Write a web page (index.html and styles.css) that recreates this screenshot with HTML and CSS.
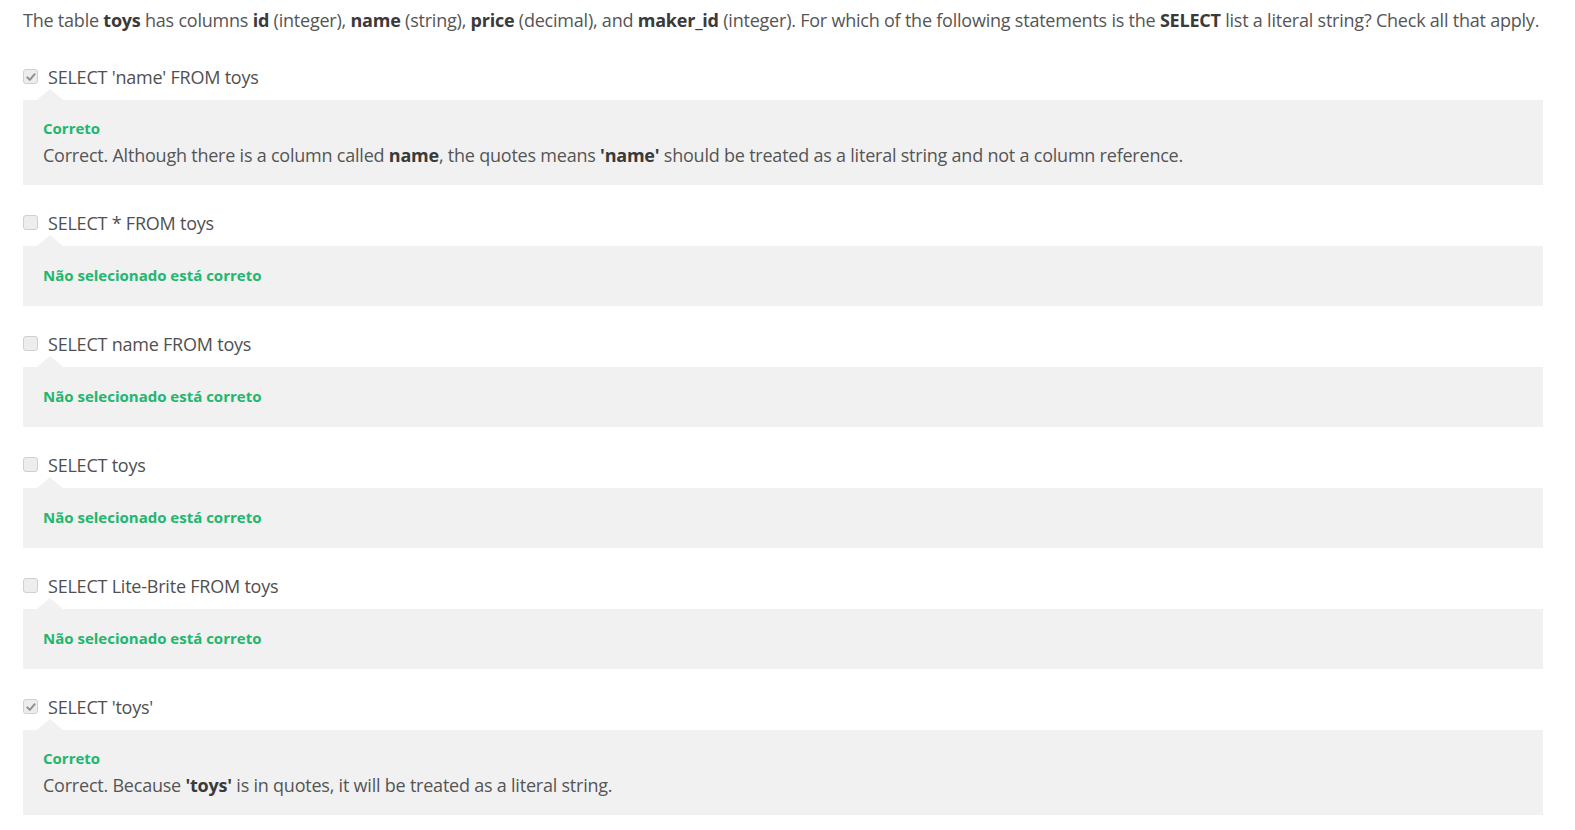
FILE: index.html
```html
<!DOCTYPE html>
<html lang="en">
<head>
<meta charset="utf-8">
<title>Quiz feedback</title>
<link rel="stylesheet" href="styles.css">
</head>
<body>
<div class="quiz">
  <p class="question">The table <b>toys</b> has columns <b>id</b> (integer), <b>name</b> (string), <b>price</b> (decimal), and <b>maker_id</b> (integer). For which of the following statements is the <b>SELECT</b> list a literal string? Check all that apply.</p>

  <div class="option">
    <div class="choice"><span class="box checked"><svg viewBox="0 0 12 12"><path d="M2.3 6.4 L4.8 8.9 L9.7 3.2" /></svg></span><span class="label">SELECT 'name' FROM toys</span></div>
    <div class="feedback">
      <div class="verdict">Correto</div>
      <div class="explain">Correct. Although there is a column called <b>name</b>, the quotes means <b>'name'</b> should be treated as a literal string and not a column reference.</div>
    </div>
  </div>

  <div class="option">
    <div class="choice"><span class="box"></span><span class="label">SELECT * FROM toys</span></div>
    <div class="feedback short">
      <div class="verdict">Não selecionado está correto</div>
    </div>
  </div>

  <div class="option">
    <div class="choice"><span class="box"></span><span class="label">SELECT name FROM toys</span></div>
    <div class="feedback short">
      <div class="verdict">Não selecionado está correto</div>
    </div>
  </div>

  <div class="option">
    <div class="choice"><span class="box"></span><span class="label">SELECT toys</span></div>
    <div class="feedback short">
      <div class="verdict">Não selecionado está correto</div>
    </div>
  </div>

  <div class="option">
    <div class="choice"><span class="box"></span><span class="label">SELECT Lite-Brite FROM toys</span></div>
    <div class="feedback short">
      <div class="verdict">Não selecionado está correto</div>
    </div>
  </div>

  <div class="option">
    <div class="choice"><span class="box checked"><svg viewBox="0 0 12 12"><path d="M2.3 6.4 L4.8 8.9 L9.7 3.2" /></svg></span><span class="label">SELECT 'toys'</span></div>
    <div class="feedback">
      <div class="verdict">Correto</div>
      <div class="explain">Correct. Because <b>'toys'</b> is in quotes, it will be treated as a literal string.</div>
    </div>
  </div>
</div>
</body>
</html>
```

FILE: styles.css
```css
html, body {
  margin: 0;
  padding: 0;
  background: #ffffff;
}

body {
  font-family: "Open Sans", "Liberation Sans", sans-serif;
  font-size: 18px;
  letter-spacing: -0.22px;
  color: #555555;
}

b {
  font-weight: 700;
  color: #3a3a3a;
}

.quiz {
  width: 1520px;
  padding: 7px 0 0 23px;
  display: flex;
  flex-direction: column;
}

.question {
  margin: 0 0 31px 0;
  line-height: 26px;
  white-space: nowrap;
}

.option {
  display: flex;
  flex-direction: column;
  margin-bottom: 25px;
}

.choice {
  display: flex;
  align-items: center;
  gap: 10px;
  height: 26px;
  line-height: 26px;
}

.box {
  width: 13px;
  height: 13px;
  border: 1px solid #d0d0d0;
  border-radius: 3px;
  background: #ededed;
  display: flex;
  align-items: center;
  justify-content: center;
  margin-top: -1px;
  flex: none;
}

.box svg {
  width: 12px;
  height: 12px;
}

.box svg path {
  fill: none;
  stroke: #8f8f8f;
  stroke-width: 2;
  stroke-linecap: round;
  stroke-linejoin: round;
}

.label {
  color: #505050;
}

.feedback {
  position: relative;
  margin-top: 10px;
  background: #f1f1f1;
  padding: 18px 20px 17px 20px;
}

.feedback.short {
  padding-top: 19px;
  padding-bottom: 20px;
}

.feedback::before {
  content: "";
  position: absolute;
  top: -11px;
  left: 14px;
  width: 0;
  height: 0;
  border-left: 13px solid transparent;
  border-right: 13px solid transparent;
  border-bottom: 11px solid #f1f1f1;
}

.verdict {
  font-size: 15px;
  font-weight: 700;
  letter-spacing: 0;
  line-height: 21px;
  color: #22b66e;
}

.explain {
  margin-top: 4px;
  line-height: 25px;
}
```
